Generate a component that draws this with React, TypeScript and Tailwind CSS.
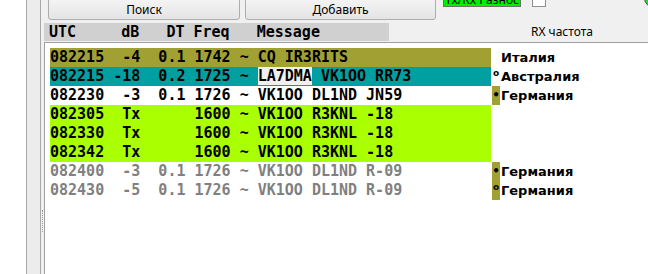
import React from "react";

type Row = {
  bg: string;
  text: React.ReactNode;
  grey?: boolean;
  marker?: string;
  markerBg?: boolean;
  country?: string;
};

const mono = "font-['DejaVu_Sans_Mono',monospace] font-bold text-[15px]";

const rows: Row[] = [
  { bg: "bg-[#a1a133]", text: "082215  -4  0.1 1742 ~ CQ IR3RITS", country: "Италия" },
  {
    bg: "bg-[#00a0a0]",
    text: (
      <>
        {"082215 -18  0.2 1725 ~ "}
        <span className="bg-[#f0f0f0]">LA7DMA</span>
        {" VK1OO RR73"}
      </>
    ),
    marker: "o",
    country: "Австралия",
  },
  { bg: "bg-white", text: "082230  -3  0.1 1726 ~ VK1OO DL1ND JN59", marker: "•", markerBg: true, country: "Германия" },
  { bg: "bg-[#aaff00]", text: "082305  Tx      1600 ~ VK1OO R3KNL -18" },
  { bg: "bg-[#aaff00]", text: "082330  Tx      1600 ~ VK1OO R3KNL -18" },
  { bg: "bg-[#aaff00]", text: "082342  Tx      1600 ~ VK1OO R3KNL -18" },
  { bg: "bg-white", grey: true, text: "082400  -3  0.1 1726 ~ VK1OO DL1ND R-09", marker: "•", markerBg: true, country: "Германия" },
  { bg: "bg-white", grey: true, text: "082430  -5  0.1 1726 ~ VK1OO DL1ND R-09", marker: "o", markerBg: true, country: "Германия" },
];

export default function App() {
  return (
    <div className="w-[648px] h-[274px] overflow-hidden flex bg-white">
      <div className="w-[26px] shrink-0 bg-white" />
      <div className="w-[15px] shrink-0 bg-[#ececec] border-x border-[#a8a8a8]" />
      <div className="w-[3px] shrink-0 bg-[#f0f0f0] flex flex-col items-center pt-[210px]">
        <div className="h-[22px] border-l border-dotted border-[#9a9a9a]" />
      </div>
      <div className="flex-1 min-w-0 flex flex-col bg-[#f0f0f0]">
        {/* top row */}
        <div className="h-[21px] shrink-0 flex items-start overflow-hidden font-['Noto_Sans',sans-serif] text-[12px] text-black">
          <div className="ml-[4px] -mt-[4px] h-[24px] w-[192px] shrink-0 rounded-[3px] border border-[#adadad] bg-gradient-to-b from-[#f6f6f6] to-[#e4e4e4] flex items-center justify-center pt-[3px]">
            Поиск
          </div>
          <div className="ml-[5px] -mt-[4px] h-[24px] w-[191px] shrink-0 rounded-[3px] border border-[#adadad] bg-gradient-to-b from-[#f6f6f6] to-[#e4e4e4] flex items-center justify-center pt-[3px]">
            Добавить
          </div>
          <div className="ml-[7px] -mt-[15px] h-[22px] w-[78px] shrink-0 border border-[#707070] bg-[#00ee00] flex items-center justify-center leading-none pt-[8px]">
            Tx/Rx Разнос
          </div>
          <div className="ml-[11px] -mt-[7px] h-[14px] w-[14px] shrink-0 border border-[#8f8f8f] bg-white" />
          <div className="ml-[5px] -mt-[12px] leading-none">Поиск</div>
          <div className="ml-auto -mt-[12px] mr-[-16px] h-[20px] w-[20px] shrink-0 rounded-full border border-[#555] bg-[#22dd22]" />
        </div>
        {/* header */}
        <div className="mt-[2px] h-[18px] shrink-0 flex items-center">
          <div className={`w-[345px] h-full bg-[#d0d0d0] pl-[5px] whitespace-pre leading-[18px] text-black ${mono}`}>
            {"UTC     dB   DT Freq   Message"}
          </div>
          <div className="ml-[142px] font-['Noto_Sans',sans-serif] text-[12px] text-black">RX частота</div>
        </div>
        {/* content */}
        <div className="mt-[1px] flex-1 bg-white border-t border-l border-[#a0a0a0] pt-[5px] pl-[5px]">
          {rows.map((r, i) => (
            <div key={i} className="flex h-[19px]">
              <div
                className={`w-[441px] shrink-0 ${r.bg} whitespace-pre leading-[19px] ${mono} ${
                  r.grey ? "text-[#808080]" : "text-black"
                }`}
              >
                {r.text}
              </div>
              <div
                className={`ml-[1px] w-[8px] shrink-0 flex justify-center font-['DejaVu_Sans',sans-serif] font-bold text-black ${
                  r.markerBg ? "bg-[#a1a133]" : ""
                } ${r.marker === "o" ? "items-start text-[9px] leading-[12px]" : "items-center text-[12px] leading-[19px]"}`}
              >
                {r.marker ?? ""}
              </div>
              <div className="ml-[1px] font-['DejaVu_Sans',sans-serif] font-bold text-[13px] leading-[19px] text-black">
                {r.country ?? ""}
              </div>
            </div>
          ))}
        </div>
      </div>
    </div>
  );
}
